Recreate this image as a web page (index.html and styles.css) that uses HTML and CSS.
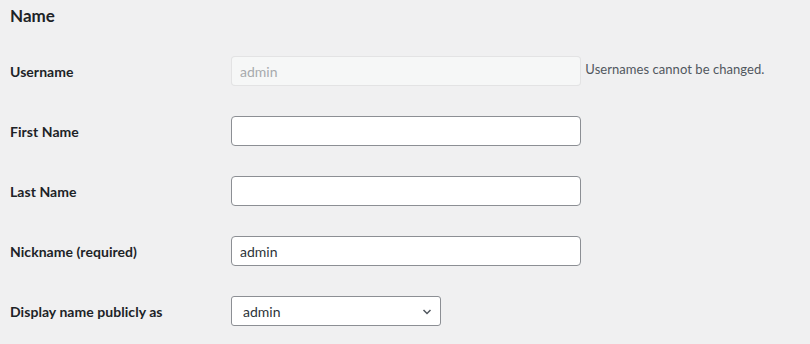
FILE: index.html
```html
<!DOCTYPE html>
<html>
<head>
<meta http-equiv="Content-Type" content="text/html; charset=utf-8"/>
<title>Profile</title>
<link rel="stylesheet" href="styles.css">
</head>
<body>
<div class="wrap">
<h2>Name</h2>

<table class="form-table">
<tr>
  <th><label for="user_login">Username</label></th>
  <td><input type="text" id="user_login" class="regular-text" value="admin" disabled> <span class="description">Usernames cannot be changed.</span></td>
</tr>
<tr>
  <th><label for="first_name">First Name</label></th>
  <td><input type="text" id="first_name" class="regular-text" value=""></td>
</tr>
<tr>
  <th><label for="last_name">Last Name</label></th>
  <td><input type="text" id="last_name" class="regular-text" value=""></td>
</tr>
<tr>
  <th><label for="nickname">Nickname (required)</label></th>
  <td><input type="text" id="nickname" class="regular-text" value="admin"></td>
</tr>
<tr>
  <th><label for="display_name">Display name publicly as</label></th>
  <td>
    <span class="select-wrap">
      <select id="display_name">
        <option selected>admin</option>
      </select>
      <svg class="chevron" width="16" height="16" viewBox="0 0 16 16"><path d="M4.5 6l3.5 3.5 3.5-3.5" fill="none" stroke="#50575e" stroke-width="1.5"/></svg>
    </span>
  </td>
</tr>
</table>
</div>
</body>
</html>
```

FILE: styles.css
```css
body {
   margin: 0;
   background-color: #f0f0f1;
   color: #1d2327;
   font-family: Lato, "Open Sans", sans-serif;
   font-size: 13px;
   line-height: 1.4;
}

.wrap {
   padding: 0 10px;
}

h2 {
   font-size: 17px;
   font-weight: 700;
   line-height: 22px;
   margin: 5px 0 14px;
}

.form-table {
   border-collapse: collapse;
   border-spacing: 0;
}

.form-table th {
   width: 200px;
   padding: 22px 10px 18px 0;
   text-align: left;
   vertical-align: top;
   font-size: 14px;
   font-weight: 700;
   line-height: 1.3;
   letter-spacing: 0.05px;
}

.form-table td {
   padding: 15px 10px 15px 11px;
   vertical-align: middle;
   line-height: 1.3;
}

input.regular-text {
   box-sizing: border-box;
   width: 350px;
   height: 30px;
   padding: 0 8px;
   margin: 0;
   font-family: inherit;
   font-size: 14px;
   color: #2c3338;
   background: #fff;
   border: 1px solid #8c8f94;
   border-radius: 4px;
   vertical-align: middle;
}

input.regular-text:disabled {
   background: #f6f7f7;
   border-color: rgba(220, 220, 222, 0.75);
   color: #a7aaad;
}

.description {
   color: #50575e;
   font-size: 13px;
   margin-left: 1px;
   letter-spacing: 0.05px;
}

.select-wrap {
   position: relative;
   display: inline-block;
}

select {
   box-sizing: border-box;
   width: 210px;
   height: 30px;
   padding: 0 24px 0 11px;
   margin: 0;
   font-family: inherit;
   font-size: 14px;
   color: #2c3338;
   background: #fff;
   border: 1px solid #8c8f94;
   border-radius: 3px;
   -webkit-appearance: none;
   appearance: none;
   vertical-align: middle;
}

.chevron {
   position: absolute;
   right: 6px;
   top: 8px;
   pointer-events: none;
}
```
